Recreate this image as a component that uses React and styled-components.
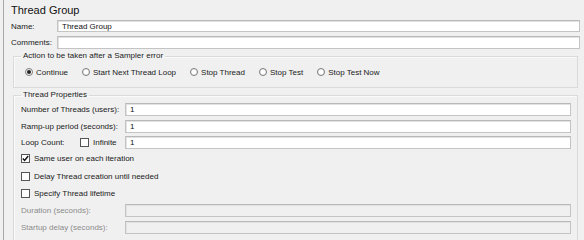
import styled, { createGlobalStyle } from "styled-components";

const Global = createGlobalStyle`
  html, body {
    margin: 0;
    padding: 0;
    background: #f0f0f0;
  }
  body {
    font-family: "Liberation Sans", Arial, sans-serif;
    color: #1a1a1a;
  }
`;

const Frame = styled.div`
  margin-left: 3px;
  height: 240px;
  box-sizing: border-box;
  border-left: 1px solid #a8a8a8;
  padding: 3px 4px 0 7px;
  display: flex;
  flex-direction: column;
  overflow: hidden;
  font-size: 8px;
`;

const Title = styled.div`
  font-size: 11px;
  line-height: 14px;
  height: 14px;
  color: #111;
`;

const TopRow = styled.div`
  display: flex;
  align-items: center;
  margin-top: ${(p) => p.$top}px;
`;

const Label = styled.span`
  width: ${(p) => p.$w}px;
  flex: none;
  color: ${(p) => (p.$disabled ? "#8c8c8c" : "#1a1a1a")};
  white-space: nowrap;
`;

const Field = styled.div`
  flex: 1;
  height: ${(p) => p.$h || 12}px;
  box-sizing: border-box;
  background: ${(p) => (p.$disabled ? "#f0f0f0" : "#fff")};
  border: 1px solid #c4c4c4;
  border-top-color: #b8b8b8;
  box-shadow: inset 1px 1px 0 #e2e2e2;
  padding-left: 4px;
  display: flex;
  align-items: center;
  font-size: 8px;
  color: #111;
`;

const Panel = styled.fieldset`
  margin: ${(p) => p.$top}px 2px 0 2px;
  padding: 0 6px 0 6px;
  border: 1px solid #dadada;
  box-shadow: inset 1px 1px 0 #fafafa;
  min-width: 0;
  ${(p) => p.$open && "border-bottom: none; flex: 1;"}
  legend {
    padding: 0 2px;
    margin-left: 1px;
    font-size: 8px;
    line-height: 10px;
    color: #1a1a1a;
  }
`;

const RadioRow = styled.div`
  display: flex;
  align-items: center;
  height: 22px;
  padding: 0 0 4px 5px;
  gap: 14px;
`;

const Option = styled.label`
  display: flex;
  align-items: center;
  gap: 3px;
  white-space: nowrap;
`;

const Radio = styled.span`
  width: 8px;
  height: 8px;
  box-sizing: border-box;
  border-radius: 50%;
  border: 1px solid #7a7a7a;
  background: radial-gradient(circle, #ffffff 40%, #e6e6e6 100%);
  position: relative;
  flex: none;
  &::after {
    content: "";
    display: ${(p) => (p.$on ? "block" : "none")};
    position: absolute;
    left: 1px;
    top: 1px;
    width: 4px;
    height: 4px;
    border-radius: 50%;
    background: #222;
  }
`;

const Box = styled.span`
  width: 9px;
  height: 9px;
  box-sizing: border-box;
  border: 1px solid #555;
  background: #fff;
  flex: none;
  display: flex;
  align-items: center;
  justify-content: center;
`;

const Rows = styled.div`
  display: flex;
  flex-direction: column;
  padding-top: 1px;
`;

const Row = styled.div`
  display: flex;
  align-items: center;
  height: ${(p) => p.$h || 17}px;
  padding-left: 1px;
`;

const Check = styled.label`
  display: flex;
  align-items: center;
  gap: 4px;
  white-space: nowrap;
  width: ${(p) => p.$w || "auto"};
  flex: none;
`;

const Tick = () => (
  <svg width="7" height="7" viewBox="0 0 7 7">
    <path d="M0.8 3.6 L2.6 5.5 L6.2 1" fill="none" stroke="#111" strokeWidth="1.4" />
  </svg>
);

const CheckBox = ({ on, children, w }) => (
  <Check $w={w}>
    <Box>{on && <Tick />}</Box>
    {children}
  </Check>
);

const actions = ["Continue", "Start Next Thread Loop", "Stop Thread", "Stop Test", "Stop Test Now"];

export default function App() {
  return (
    <>
      <Global />
      <Frame>
        <Title>Thread Group</Title>
        <TopRow $top={3}>
          <Label $w={46}>Name:</Label>
          <Field>Thread Group</Field>
        </TopRow>
        <TopRow $top={4}>
          <Label $w={46}>Comments:</Label>
          <Field $h={13} />
        </TopRow>

        <Panel $top={2}>
          <legend>Action to be taken after a Sampler error</legend>
          <RadioRow>
            {actions.map((a, i) => (
              <Option key={a}>
                <Radio $on={i === 0} />
                {a}
              </Option>
            ))}
          </RadioRow>
        </Panel>

        <Panel $top={2} $open>
          <legend>Thread Properties</legend>
          <Rows>
            <Row $h={17}>
              <Label $w={104}>Number of Threads (users):</Label>
              <Field $h={13}>1</Field>
            </Row>
            <Row $h={16}>
              <Label $w={104}>Ramp-up period (seconds):</Label>
              <Field $h={13}>1</Field>
            </Row>
            <Row $h={16}>
              <Label $w={59}>Loop Count:</Label>
              <CheckBox w="45px">Infinite</CheckBox>
              <Field $h={13}>1</Field>
            </Row>
            <Row $h={17}>
              <CheckBox on>Same user on each iteration</CheckBox>
            </Row>
            <Row $h={18}>
              <CheckBox>Delay Thread creation until needed</CheckBox>
            </Row>
            <Row $h={17}>
              <CheckBox>Specify Thread lifetime</CheckBox>
            </Row>
            <Row $h={17}>
              <Label $w={104} $disabled>Duration (seconds):</Label>
              <Field $h={13} $disabled />
            </Row>
            <Row $h={16}>
              <Label $w={104} $disabled>Startup delay (seconds):</Label>
              <Field $h={13} $disabled />
            </Row>
          </Rows>
        </Panel>
      </Frame>
    </>
  );
}
